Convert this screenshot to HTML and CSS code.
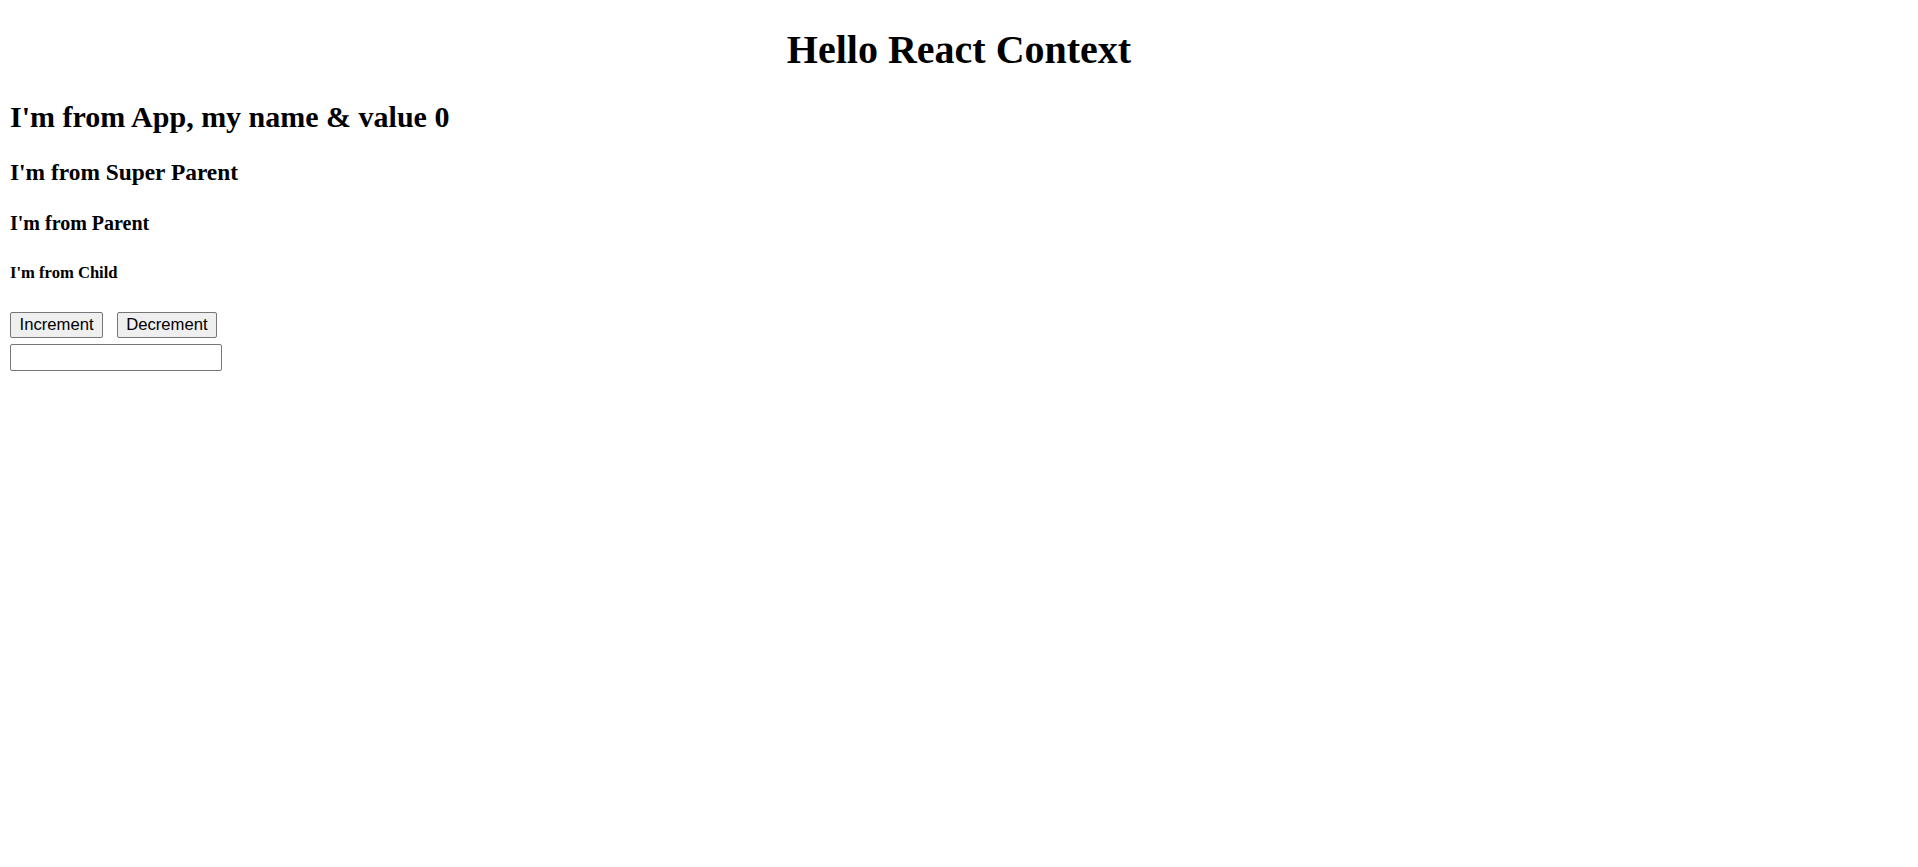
FILE: index.html
```html
<!DOCTYPE html>
<html>
<head>
<meta charset="utf-8">
<title>Hello React Context</title>
<link rel="stylesheet" href="styles.css">
</head>
<body>
<div id="root">
  <div class="app">
    <h1 class="title">Hello React Context</h1>
    <h2>I'm from App, my name &amp; value 0</h2>
    <div class="super-parent">
      <h3>I'm from Super Parent</h3>
      <div class="parent">
        <h4>I'm from Parent</h4>
        <div class="child">
          <h5>I'm from Child</h5>
          <div class="controls">
            <button class="btn">Increment</button>
            <button class="btn">Decrement</button>
          </div>
          <input class="field" type="text">
        </div>
      </div>
    </div>
  </div>
</div>
</body>
</html>
```
FILE: styles.css
```css
html {
  font-size: 20px;
}
body {
  margin: 10px;
  font-family: "Liberation Serif", "Times New Roman", serif;
  font-size: 20px;
  color: #000;
  background: #fff;
}
.title {
  text-align: center;
  margin-top: 16px;
}
.controls {
  display: flex;
  gap: 13.6px;
  margin-top: 28.5px;
}
.btn {
  font-family: "Liberation Sans", Arial, sans-serif;
  font-size: 16.667px;
  line-height: normal;
  padding: 2px 8.5px;
  border: 1px solid #767676;
  border-radius: 2px;
  background: #efefef;
  color: #000;
  margin: 0;
}
.field {
  display: block;
  font-family: "Liberation Sans", Arial, sans-serif;
  font-size: 16.667px;
  box-sizing: border-box;
  width: 211.5px;
  height: 26.7px;
  margin: 6.7px 0 0 0;
  padding: 1px 2px;
  border: 1px solid #767676;
  border-radius: 2px;
  background: #fff;
}
```
